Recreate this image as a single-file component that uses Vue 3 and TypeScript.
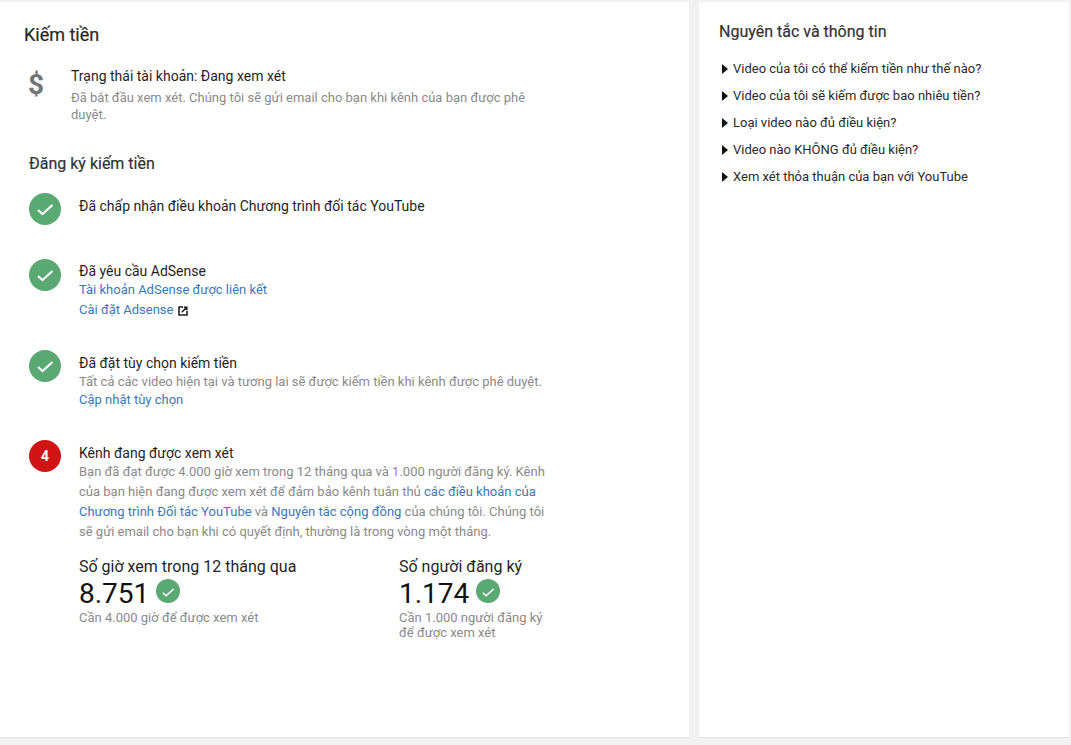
<script setup lang="ts">
const faqs: string[] = [
  'Video của tôi có thể kiếm tiền như thế nào?',
  'Video của tôi sẽ kiếm được bao nhiêu tiền?',
  'Loại video nào đủ điều kiện?',
  'Video nào KHÔNG đủ điều kiện?',
  'Xem xét thỏa thuận của bạn với YouTube',
]
</script>

<template>
  <div class="page">
    <main class="card main">
      <h1 class="title">Kiếm tiền</h1>
      <section class="status">
        <div class="dollar">$</div>
        <div class="status-text">
          <div class="strong">Trạng thái tài khoản: Đang xem xét</div>
          <p class="muted">Đã bắt đầu xem xét. Chúng tôi sẽ gửi email cho bạn khi kênh của bạn được phê duyệt.</p>
        </div>
      </section>

      <h2 class="subtitle">Đăng ký kiếm tiền</h2>

      <section class="step step1">
        <span class="badge ok">
          <svg viewBox="0 0 32 32" class="tick"><path d="M9 17l4.5 4L23.5 12" /></svg>
        </span>
        <div class="body"><div class="strong">Đã chấp nhận điều khoản Chương trình đối tác YouTube</div></div>
      </section>

      <section class="step step2">
        <span class="badge ok">
          <svg viewBox="0 0 32 32" class="tick"><path d="M9 17l4.5 4L23.5 12" /></svg>
        </span>
        <div class="body">
          <div class="strong">Đã yêu cầu AdSense</div>
          <a class="link line">Tài khoản AdSense được liên kết</a>
          <a class="link line ext">Cài đặt Adsense
            <svg viewBox="0 0 10 10" class="ext-icon"><path d="M5 1H1v8h8V5M3.8 6.2L8.3 1.7M5.8 1.2h3v3" /></svg>
          </a>
        </div>
      </section>

      <section class="step step3">
        <span class="badge ok">
          <svg viewBox="0 0 32 32" class="tick"><path d="M9 17l4.5 4L23.5 12" /></svg>
        </span>
        <div class="body">
          <div class="strong">Đã đặt tùy chọn kiếm tiền</div>
          <div class="muted one">Tất cả các video hiện tại và tương lai sẽ được kiếm tiền khi kênh được phê duyệt.</div>
          <a class="link line tight">Cập nhật tùy chọn</a>
        </div>
      </section>

      <section class="step step4">
        <span class="badge num">4</span>
        <div class="body">
          <div class="strong">Kênh đang được xem xét</div>
          <p class="muted para">Bạn đã đạt được 4.000 giờ xem trong 12 tháng qua và 1.000 người đăng ký. Kênh của bạn hiện đang được xem xét để đảm bảo kênh tuân thủ <a class="link">các điều khoản của Chương trình Đối tác YouTube</a> và <a class="link">Nguyên tắc cộng đồng</a> của chúng tôi. Chúng tôi sẽ gửi email cho bạn khi có quyết định, thường là trong vòng một tháng.</p>
          <div class="stats">
            <div class="stat hours">
              <div class="stat-label">Số giờ xem trong 12 tháng qua</div>
              <div class="stat-value">8.751
                <span class="mini">
                  <svg viewBox="0 0 32 32" class="tick"><path d="M9 17l4.5 4L23.5 12" /></svg>
                </span>
              </div>
              <div class="muted stat-note">Cần 4.000 giờ để được xem xét</div>
            </div>
            <div class="stat subs">
              <div class="stat-label">Số người đăng ký</div>
              <div class="stat-value">1.174
                <span class="mini">
                  <svg viewBox="0 0 32 32" class="tick"><path d="M9 17l4.5 4L23.5 12" /></svg>
                </span>
              </div>
              <div class="muted stat-note">Cần 1.000 người đăng ký<br />để được xem xét</div>
            </div>
          </div>
        </div>
      </section>
    </main>

    <aside class="card side">
      <h2 class="side-title">Nguyên tắc và thông tin</h2>
      <ul class="faq">
        <li v-for="q in faqs" :key="q" class="faq-item">
          <span class="arrow"></span>
          <span>{{ q }}</span>
        </li>
      </ul>
    </aside>
  </div>
</template>

<style>
html, body { margin: 0; background: #f1f1f1; }
</style>

<style scoped>
.page {
  width: 1071px;
  height: 745px;
  box-sizing: border-box;
  padding: 2px 2px 8px 0;
  display: flex;
  gap: 10px;
  background: #f1f1f1;
  font-family: Roboto, "Noto Sans", sans-serif;
  overflow: hidden;
}
.card { background: #fff; box-sizing: border-box; box-shadow: 0 1px 1px rgba(0,0,0,.05); }
.main { width: 689px; padding: 23px 0 0 24px; }
.side { width: 370px; padding: 20px 0 0 20px; }
.title { margin: 0; font-size: 18px; line-height: 20px; font-weight: 400; color: #282828; -webkit-text-stroke: .2px #282828; }
.status { display: flex; margin-top: 22px; }
.dollar { width: 47px; padding-left: 4px; box-sizing: border-box; font-size: 28px; line-height: 36px; color: #757575; font-weight: 700; }
.status-text { width: 460px; }
.strong { font-size: 14px; line-height: 18px; color: #1f1f1f; }
.muted { font-size: 13px; line-height: 18px; color: #8a8a8a; margin: 0; }
.status-text .muted { margin-top: 4px; line-height: 17px; }
.subtitle { margin: 31px 0 0 5px; font-size: 16px; line-height: 20px; font-weight: 400; color: #333; -webkit-text-stroke: .2px #333; }
.step { display: flex; margin-left: 5px; }
.badge { flex: none; width: 32px; height: 32px; border-radius: 50%; display: flex; align-items: center; justify-content: center; }
.ok { background: #5aa872; }
.num { background: #d01414; color: #fff; font-size: 14px; font-weight: 700; }
.tick { width: 100%; height: 100%; fill: none; stroke: #fff; stroke-width: 2.1; }
.body { margin-left: 18px; width: 470px; padding-top: 4px; }
.step1 { margin-top: 19px; }
.step2 { margin-top: 34px; }
.step2 .body { padding-top: 3px; }
.step3 { margin-top: 30px; }
.step4 { margin-top: 31px; }
.link { color: #3a78b8; font-size: 13px; text-decoration: none; }
.line { display: block; line-height: 20px; }
.tight { line-height: 18px; margin-top: -1px; }
.ext { display: flex; align-items: center; gap: 5px; }
.ext-icon { width: 10px; height: 10px; fill: none; stroke: #222; stroke-width: 1.6; margin-top: 1px; }
.one { line-height: 20px; white-space: nowrap; }
.para { line-height: 20px; margin-top: 0; }
.stats { display: flex; margin-top: 15px; }
.stat { flex: none; }
.hours { width: 320px; }
.stat-label { font-size: 16px; line-height: 20px; color: #1f1f1f; }
.stat-value { font-size: 28px; line-height: 32px; color: #111; display: flex; align-items: center; gap: 7px; height: 32px; margin-top: 1px; }
.mini { width: 24px; height: 24px; border-radius: 50%; background: #5aa872; display: block; margin-top: -7px; }
.stat-note { line-height: 15px; margin-top: 0; }
.side-title { margin: 0; font-size: 16px; line-height: 20px; font-weight: 400; color: #333; -webkit-text-stroke: .2px #333; }
.faq { list-style: none; margin: 13px 0 0; padding: 0; }
.faq-item { display: flex; align-items: center; height: 27px; font-size: 13px; color: #2a2a2a; }
.arrow { width: 0; height: 0; border-left: 6px solid #111; border-top: 5px solid transparent; border-bottom: 5px solid transparent; margin: 0 5px 0 3px; }
</style>
